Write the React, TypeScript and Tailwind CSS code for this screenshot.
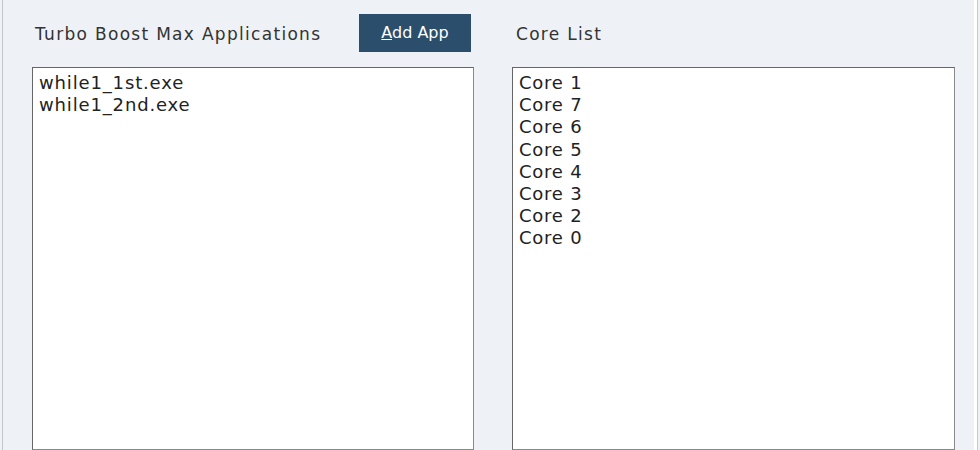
export default function App() {
  const apps = ['while1_1st.exe', 'while1_2nd.exe']
  const cores = ['Core 1', 'Core 7', 'Core 6', 'Core 5', 'Core 4', 'Core 3', 'Core 2', 'Core 0']

  return (
    <div
      className="flex h-[450px] w-[980px] overflow-hidden bg-[#eef2f6] text-[#222]"
      style={{ fontFamily: '"DejaVu Sans", Verdana, sans-serif' }}
    >
      <div className="ml-[2px] w-px bg-[#c4c8cc]" />

      <div className="flex flex-1 gap-[38px] pl-[29px] pt-[14px]">
        {/* applications */}
        <div className="flex w-[442px] flex-col">
          <div className="flex h-[38px] items-center">
            <span className="ml-[3px] mt-[3px] text-[17px] tracking-[1.3px] text-[#333]">
              Turbo Boost Max Applications
            </span>
            <button className="ml-auto mr-[3px] flex h-[38px] w-[112px] items-center justify-center bg-[#2b4e6c] text-[16px] text-white">
              <span>
                <span className="underline">A</span>dd App
              </span>
            </button>
          </div>
          <div className="mt-[15px] flex-1 border border-[#8a8a8a] border-l-[#666] border-t-[#666] bg-white px-[6px] pt-[4px] text-[18px] leading-[22px] tracking-[0.85px]">
            {apps.map((a) => (
              <div key={a}>{a}</div>
            ))}
          </div>
        </div>

        {/* cores */}
        <div className="flex w-[443px] flex-col">
          <div className="flex h-[38px] items-center">
            <span className="ml-[4px] mt-[3px] text-[17px] tracking-[1.3px] text-[#333]">Core List</span>
          </div>
          <div className="mt-[15px] flex-1 border border-[#8a8a8a] border-l-[#666] border-t-[#666] bg-white px-[6px] pt-[4px] text-[18px] leading-[22.2px] tracking-[0.75px]">
            {cores.map((c) => (
              <div key={c}>{c}</div>
            ))}
          </div>
        </div>
      </div>

      <div className="mr-[2px] flex w-[4px]">
        <div className="w-[3px] bg-white" />
        <div className="w-px bg-[#c4c8cc]" />
      </div>
    </div>
  )
}
